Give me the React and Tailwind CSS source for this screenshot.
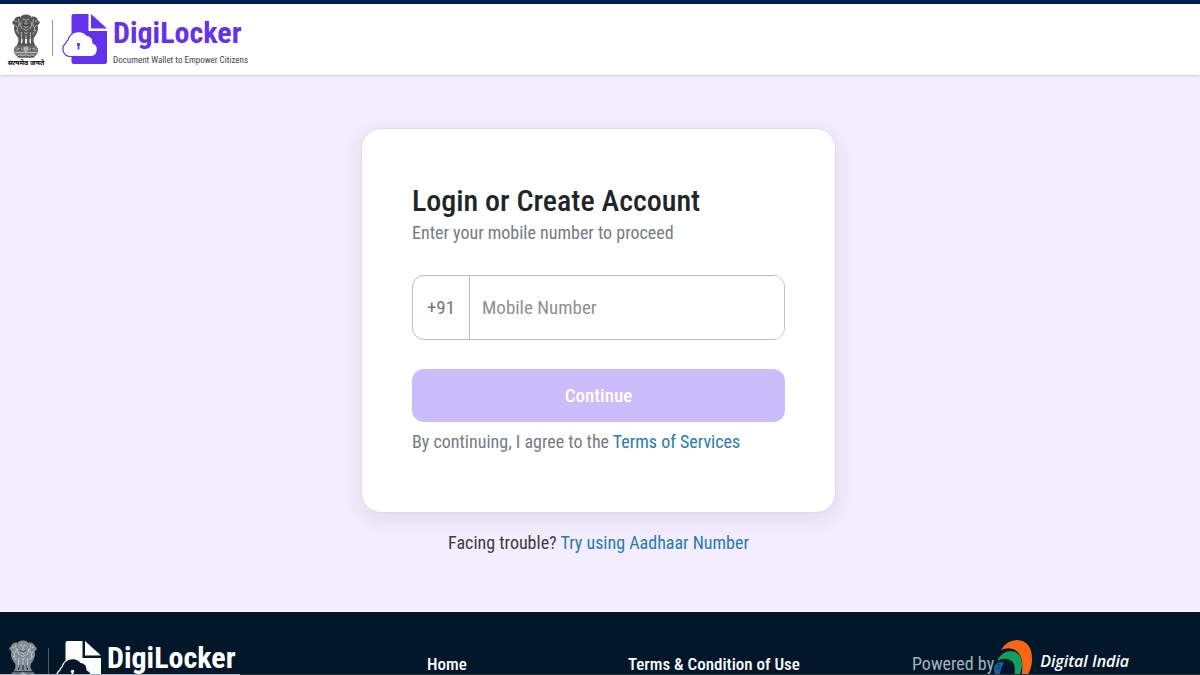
function Emblem({ className }) {
  return (
    <svg viewBox="0 0 36 44" preserveAspectRatio="none" className={className} fill="currentColor" aria-hidden="true">
      <g opacity="0.8">
        <path d="M11 4 Q12 0.500 18 0.500 Q24 0.500 25 4 L27 10 Q26 15 23 17 H13 Q10 15 9 10Z" />
        <path d="M11 2.500 Q5 2 4 6 L1.500 8 Q1 10 4 11 L3.500 15 Q5 21 9 24 H15 L14 14Z" />
        <path d="M25 2.500 Q31 2 32 6 L34.500 8 Q35 10 32 11 L32.500 15 Q31 21 27 24 H21 L22 14Z" />
        <path d="M10 14 H26 L25 25 H11Z" />
        <path d="M8.500 21 H12 L12 30 H8 L9 27Z" />
        <path d="M13.500 22 H16.800 V30 H12.800 L13.800 28Z" />
        <path d="M19.200 22 H22.500 L22.200 28 L23.200 30 H19.200Z" />
        <path d="M24 21 H27.500 L27 27 L28 30 H24Z" />
        <path d="M8 29.500 H28 L29.500 31.500 H6.500Z" />
        <path d="M5.500 32 H30.500 Q33.500 35 32.500 38 Q31 42 27 43.500 H9 Q5 42 3.500 38 Q2.500 35 5.500 32Z" opacity="0.8" />
      </g>
      <g fill="none" stroke="#dedede" strokeWidth="0.75">
        <path d="M14 5 L17 5.500 M19 5.500 L22 5 M16 9.500 Q18 11 20 9.500 M18 6 V9" />
        <path d="M12 7 Q10 12 13.500 15 M24 7 Q26 12 22.500 15 M15 12 Q18 15 21 12 M15 15 Q18 18 21 15 M16 18 L18 20 L20 18" />
        <path d="M4.500 7 L7.500 7.500 M31.500 7 L28.500 7.500 M5 11 Q9 13 8 17 M31 11 Q27 13 28 17 M9 5 Q11 10 9 13 M27 5 Q25 10 27 13" />
        <path d="M6 16 L10 20 M30 16 L26 20 M12.700 18 V28 M18 21 V29 M23.300 18 V28" />
        <circle cx="18" cy="35" r="2.400" />
        <path d="M18 32.600 V37.400 M15.600 35 H20.400 M7 36 Q9 33 13.500 35.500 M29 36 Q27 33 22.500 35.500" />
        <path d="M4.500 38.500 H31.500 M8 42 Q11 39 14 42 Q18 39 22 42 Q25 39 28 42" />
      </g>
      <path d="M10.500 7 L12 8.500 M25.500 7 L24 8.500 M14 10.500 Q18 13 22 10.500 M11 33 V37 M25 33 V37 M8 43 H28 M7 31.700 H29" fill="none" stroke="#1c1c1c" strokeWidth="0.700" />
    </svg>
  );
}

function LockerMark({ className, paper, cloud, line }) {
  return (
    <svg viewBox="0 0 47 52" className={className} aria-hidden="true">
      <path d="M12 1 H27 V18 H45.500 V49 Q45.500 51 43.500 51 H12 Q10 51 10 49 V3 Q10 1 12 1Z" fill={paper} />
      <path d="M29.500 1 L45.500 15.500 H29.500Z" fill={paper} />
      <path d="M8 43.500 A7.500 7.500 0 0 1 4.500 30 Q4.500 28 6.500 27 A11 11 0 0 1 25.500 22.500 A6.500 6.500 0 0 1 31.500 30 A7 7 0 0 1 29 43.500Z" fill={cloud} stroke={line} strokeWidth="1.200" />
      <circle cx="17" cy="31.500" r="1.700" fill={line} />
      <path d="M16.300 32 H17.700 L18 36.500 H16Z" fill={line} />
    </svg>
  );
}

function DigitalIndiaMark({ className }) {
  return (
    <svg viewBox="0 0 40 40" className={className} aria-hidden="true">
      <path d="M7 10 Q13 0 23 0 Q38 1 38 19 Q38 29 32 38 H27 Q32 14 19 9 Q13 7 7 10Z" fill="#fb6514" />
      <path d="M3 21 Q8 11 17 11 Q29 12 28 27 L25 38 H20 Q23 23 16 20 Q10 17 3 21Z" fill="#12a05a" />
      <path d="M1 25 Q5 20 10 23 Q7 27 6 34 H1 Q-1 29 1 25Z" fill="#1561a0" />
      <path d="M3 25 H6 M2 28 H6" stroke="#0b315c" strokeWidth="1" />
    </svg>
  );
}

const link = "text-[#247bb5] hover:underline";

export default function App() {
  return (
    <div className="flex min-h-screen flex-col bg-[#f3edfe] font-['Roboto_Condensed','Roboto',sans-serif] text-lg leading-6 text-[#212529]">
      <header className="flex h-[75px] items-start border-t-4 border-[#001d52] bg-white pl-2 pt-2 shadow-sm">
        <div className="flex w-9 flex-col items-center pt-0.5 text-[#2b2b2b]">
          <Emblem className="h-11 w-[30px]" />
          <span lang="hi" className="whitespace-nowrap font-['Noto_Sans','Noto_Sans_Devanagari',sans-serif] text-[7px] font-bold leading-[10px] text-black">
            सत्यमेव जयते
          </span>
        </div>
        <span className="ml-2 mt-2 h-9 w-px bg-[#999]" />
        <a href="#home" className="ml-2 flex items-start">
          <LockerMark className="mt-px h-13 w-12" paper="#6431ed" cloud="#fff" line="#6431ed" />
          <span className="ml-1 flex flex-col">
            <span className="text-3xl font-bold leading-[42px] text-[#6431ed]">DigiLocker</span>
            <span className="text-[9px] leading-3 text-[#444]">Document Wallet to Empower Citizens</span>
          </span>
        </a>
      </header>

      <main className="flex flex-1 flex-col items-center pr-[3px] pt-[53px]">
        <form className="w-full max-w-[475px] rounded-[20px] border border-[#dedbe7] bg-white px-[50px] pb-[58px] pt-[54px] shadow-[0_6px_20px_rgba(50,40,90,0.1)]">
          <h1 className="text-3xl font-medium leading-9">Login or Create Account</h1>
          <label htmlFor="mobile" className="block leading-7 text-[#757c83]">Enter your mobile number to proceed</label>
          <div className="mt-7 flex h-[65px] overflow-hidden rounded-xl border border-[#bdbdbd] text-[19px] text-[#777]">
            <span className="flex w-[57px] items-center justify-center border-r border-[#bdbdbd]">+91</span>
            <input id="mobile" type="tel" placeholder="Mobile Number" className="min-w-0 flex-1 bg-white px-3 outline-none placeholder:text-[#909090]" />
          </div>
          <button type="button" className="mt-[29px] h-[53px] w-full rounded-xl bg-[#cbbdfb] text-[19px] font-medium text-white">Continue</button>
          <p className="mt-2 text-[#757c83]">
            By continuing, I agree to the <a href="#terms" className={link}>Terms of Services</a>
          </p>
        </form>
        <p className="mt-[18px] text-[#3d3945]">
          Facing trouble? <a href="#aadhaar" className={link}>Try using Aadhaar Number</a>
        </p>
      </main>

      <footer className="border-t border-white bg-[#02172a] text-[17px] font-medium text-white">
        <div className="grid h-[62px] grid-cols-[427fr_201fr_284fr_288fr] overflow-hidden">
          <a href="#top" className="flex items-start pl-2 pt-7">
            <Emblem className="h-11 w-[30px] text-[#a3abb3]" />
            <span className="ml-2.5 mt-2 h-9 w-px bg-[#4d5966]" />
            <LockerMark className="ml-1.5 h-13 w-12" paper="#fff" cloud="#02172a" line="#fff" />
            <span className="ml-1 text-3xl font-bold leading-9">DigiLocker</span>
          </a>
          <a href="#home" className="pt-10">Home</a>
          <a href="#conditions" className="pt-10">Terms &amp; Condition of Use</a>
          <div className="flex items-start">
            <span className="pt-10 text-lg font-normal leading-6 text-[#a6b2bf]">Powered by</span>
            <DigitalIndiaMark className="mt-7 size-10" />
            <span className="ml-1.5 whitespace-nowrap pt-[37px] font-['Open_Sans',sans-serif] text-base font-semibold italic">Digital India</span>
          </div>
        </div>
        <div className="h-px bg-[#21343f]">
          <div className="h-px w-1/5 bg-[#aab4c1]" />
        </div>
      </footer>
    </div>
  );
}
